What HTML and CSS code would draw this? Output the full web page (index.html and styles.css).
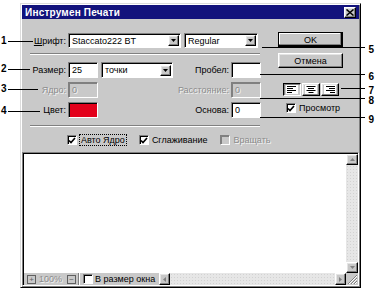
FILE: index.html
```html
<!DOCTYPE html>
<html>
<head>
<meta charset="utf-8">
<link rel="stylesheet" href="styles.css">
</head>
<body>
<div class="window">
  <div class="titlebar">
    <span class="title">Инструмен Печати</span>
    <span class="close raised"><svg width="8" height="7" viewBox="0 0 8 7"><path d="M0.5 0.5L7.5 6.5M7.5 0.5L0.5 6.5" stroke="#000" stroke-width="1.5"/></svg></span>
  </div>
  <div class="form">
    <div class="left">
      <div class="row r1">
        <span class="lbl"><u>Ш</u>рифт:</span>
        <span class="field combo w-font"><span class="val">Staccato222 BT</span><span class="drop raised"><svg width="5" height="3" viewBox="0 0 5 3"><path d="M0 0H5L2.5 3Z" fill="#000"/></svg></span></span>
        <span class="field combo w-style"><span class="val">Regular</span><span class="drop raised"><svg width="5" height="3" viewBox="0 0 5 3"><path d="M0 0H5L2.5 3Z" fill="#000"/></svg></span></span>
      </div>
      <div class="sep"></div>
      <div class="rows">
        <div class="row">
          <span class="lbl">Размер:</span>
          <span class="field w-num"><span class="val">25</span></span>
          <span class="field combo w-unit"><span class="val">точки</span><span class="drop raised"><svg width="5" height="3" viewBox="0 0 5 3"><path d="M0 0H5L2.5 3Z" fill="#000"/></svg></span></span>
          <span class="rlbl">Пробел:</span>
          <span class="field w-num"></span>
        </div>
        <div class="row">
          <span class="lbl dis">Ядро:</span>
          <span class="field w-num off"><span class="val dis">0</span></span>
          <span class="gap-unit"></span>
          <span class="rlbl dis">Расстояние:</span>
          <span class="field w-num off"><span class="val dis">0</span></span>
        </div>
        <div class="row">
          <span class="lbl">Цвет:</span>
          <span class="field w-num swatch"></span>
          <span class="gap-unit"></span>
          <span class="rlbl">Основа:</span>
          <span class="field w-num"><span class="val">0</span></span>
        </div>
      </div>
      <div class="sep sep2"></div>
      <div class="checks">
        <span class="chk"><span class="box"><svg width="8" height="7" viewBox="0 0 8 7"><path d="M1 3.5L3 5.5L7 1" fill="none" stroke="#000" stroke-width="1.6"/></svg></span><span class="focus">Авто Ядро</span></span>
        <span class="chk"><span class="box"><svg width="8" height="7" viewBox="0 0 8 7"><path d="M1 3.5L3 5.5L7 1" fill="none" stroke="#000" stroke-width="1.6"/></svg></span><span>Сглаживание</span></span>
        <span class="chk"><span class="box off"></span><span class="dis">Вращать</span></span>
      </div>
    </div>
    <div class="right">
      <span class="btn raised btn-ok">OK</span>
      <span class="btn raised btn-cancel">Отмена</span>
      <div class="aligns">
        <span class="abtn pressed"><svg width="12" height="9" viewBox="0 0 12 9"><rect width="12" height="9" fill="#fff"/><path d="M1 1.5H10M1 3.5H7M1 5.5H10M1 7.5H6" stroke="#000"/></svg></span>
        <span class="abtn raised"><svg width="12" height="9" viewBox="0 0 12 9"><rect width="12" height="9" fill="#fff"/><path d="M1.5 1.5H10.5M3 3.5H9M1.5 5.5H10.5M3.5 7.5H8.5" stroke="#000"/></svg></span>
        <span class="abtn raised"><svg width="12" height="9" viewBox="0 0 12 9"><rect width="12" height="9" fill="#fff"/><path d="M2 1.5H11M5 3.5H11M2 5.5H11M6 7.5H11" stroke="#000"/></svg></span>
      </div>
      <span class="chk preview-chk"><span class="box"><svg width="8" height="7" viewBox="0 0 8 7"><path d="M1 3.5L3 5.5L7 1" fill="none" stroke="#000" stroke-width="1.6"/></svg></span><span>Просмотр</span></span>
    </div>
  </div>
  <div class="preview">
    <div class="pv-main">
      <div class="canvas"></div>
      <div class="vscroll">
        <span class="sbtn raised"><svg width="5" height="3" viewBox="0 0 5 3"><path d="M0 3H5L2.5 0Z" fill="#808080"/></svg></span>
        <span class="track"></span>
        <span class="sbtn raised"><svg width="5" height="3" viewBox="0 0 5 3"><path d="M0 0H5L2.5 3Z" fill="#808080"/></svg></span>
      </div>
    </div>
    <div class="pv-bar">
      <span class="zbtn">+</span>
      <span class="zoomval dis">100%</span>
      <span class="zbtn">−</span>
      <span class="vsep"></span>
      <span class="chk fit"><span class="box"></span><span>В размер окна</span></span>
      <div class="hscroll">
        <span class="sbtn raised"><svg width="3" height="5" viewBox="0 0 3 5"><path d="M3 0V5L0 2.5Z" fill="#808080"/></svg></span>
        <span class="track"></span>
        <span class="sbtn raised"><svg width="3" height="5" viewBox="0 0 3 5"><path d="M0 0V5L3 2.5Z" fill="#808080"/></svg></span>
      </div>
      <span class="grip"><svg width="12" height="12" viewBox="0 0 12 12"><path d="M11 2L2 11M11 5L5 11M11 8L8 11" stroke="#808080"/><path d="M11 3L3 11M11 6L6 11M11 9L9 11" stroke="#fff"/></svg></span>
    </div>
  </div>
</div>

<div class="callout l" style="top:41px;width:25px"><b>1</b></div>
<div class="callout l" style="top:69px;width:22px"><b>2</b></div>
<div class="callout l" style="top:89px;width:30px"><b>3</b></div>
<div class="callout l" style="top:111px;width:32px"><b>4</b></div>
<div class="callout r" style="top:47px;left:262px"><b>5</b></div>
<div class="callout r" style="top:74px;left:260px"><b>6</b></div>
<div class="callout r" style="top:88px;left:341px"><b>7</b></div>
<div class="callout r" style="top:98px;left:260px"><b>8</b></div>
<div class="callout r" style="top:117px;left:260px"><b>9</b></div>
</body>
</html>
```

FILE: styles.css
```css
* { box-sizing: border-box; }
body {
  margin: 0;
  background: #fff;
  font: 9px "Liberation Sans", Arial, sans-serif;
  color: #000;
  position: relative;
  width: 377px;
  height: 292px;
  overflow: hidden;
  white-space: nowrap;
}
.raised {
  background: #c8c8c8;
  border: 1px solid;
  border-color: #fff #000 #000 #fff;
  box-shadow: inset -1px -1px #808080, inset 1px 1px #e4e4e4;
}
.dis { color: #8c8c8c; text-shadow: 1px 1px #f4f4f4; }

.window {
  margin: 3px 0 0 20px;
  width: 341px;
  height: 285px;
  background: #c9c9c9;
  border: 1px solid;
  border-color: #dcdcdc #000 #000 #dcdcdc;
  box-shadow: inset 1px 1px #fff, inset -1px -1px #808080;
  padding: 1px;
  display: flex;
  flex-direction: column;
}
.titlebar {
  height: 14px;
  flex: none;
  background: #12127c;
  display: flex;
  align-items: center;
  justify-content: space-between;
  padding: 0 3px 0 3px;
}
.title { color: #fff; font-weight: bold; font-size: 10px; letter-spacing: 0.2px; }
.close {
  width: 12px;
  height: 11px;
  display: flex;
  align-items: center;
  justify-content: center;
}

.form { display: flex; height: 133px; flex: none; }
.left { width: 240px; padding-top: 14px; }
.right {
  width: 65px;
  margin-left: 16px;
  padding-top: 13px;
  display: flex;
  flex-direction: column;
}
.row { display: flex; align-items: center; height: 16px; }
.r1 { height: 15px; }
.rows { margin-top: 7px; display: flex; flex-direction: column; gap: 4px; }
.lbl { width: 44px; text-align: right; flex: none; }
.rlbl { width: 56px; text-align: right; flex: none; }
.field {
  height: 100%;
  background: #fff;
  border: 1px solid;
  border-color: #808080 #fff #fff #808080;
  box-shadow: inset 1px 1px #000;
  display: flex;
  align-items: center;
  padding-left: 3px;
  flex: none;
  margin-left: 2px;
}
.field.off { background: #c9c9c9; box-shadow: inset 1px 1px #808080; }
.field.swatch { background: #e3001b; }
.combo { padding-right: 1px; }
.combo .val { flex: 1; }
.drop {
  width: 11px;
  height: 11px;
  display: flex;
  align-items: center;
  justify-content: center;
}
.w-font { width: 113px; }
.w-style { width: 74px; margin-left: 3px; }
.w-num { width: 30px; }
.w-unit { width: 72px; margin-left: 3px; }
.gap-unit { width: 75px; flex: none; }

.sep {
  margin: 5px 0 0 8px;
  width: 230px;
  height: 2px;
  border-top: 1px solid #808080;
  border-bottom: 1px solid #fff;
}
.sep2 { margin-top: 7px; }

.checks { margin-top: 7px; height: 12px; display: flex; align-items: center; padding-left: 45px; gap: 13px; }
.chk { display: inline-flex; align-items: center; gap: 3px; }
.box {
  width: 10px;
  height: 10px;
  background: #fff;
  border: 1px solid;
  border-color: #808080 #fff #fff #808080;
  box-shadow: inset 1px 1px #000;
  display: flex;
  align-items: center;
  justify-content: center;
  flex: none;
}
.box.off { background: #c9c9c9; box-shadow: inset 1px 1px #808080; }
.focus { outline: 1px dotted #000; outline-offset: 0; padding: 0 1px; }

.btn {
  height: 15px;
  display: flex;
  align-items: center;
  justify-content: center;
}
.btn-ok { border-color: #fff #000 #000 #fff; outline: 1px solid #000; outline-offset: -1px; box-shadow: inset -1px -1px #000, inset -2px -2px #808080, inset 1px 1px #fff; }
.btn-cancel { margin-top: 6px; }
.aligns { display: flex; gap: 1px; margin-top: 15px; padding-left: 5px; }
.abtn {
  width: 18px;
  height: 13px;
  display: flex;
  align-items: center;
  justify-content: center;
}
.pressed {
  background: #c9c9c9;
  border: 1px solid;
  border-color: #000 #fff #fff #000;
  box-shadow: inset 1px 1px #808080;
}
.preview-chk { margin-top: 7px; padding-left: 8px; }

.preview {
  flex: 1;
  display: flex;
  flex-direction: column;
  border: 1px solid;
  border-color: #808080 #fff #fff #808080;
  box-shadow: inset 1px 1px #000;
  padding: 1px 0 0 1px;
}
.pv-main { flex: 1; display: flex; }
.canvas { flex: 1; background: #fff; }
.vscroll { width: 12px; display: flex; flex-direction: column; background: #e2e2e2; }
.sbtn {
  width: 12px;
  height: 11px;
  display: flex;
  align-items: center;
  justify-content: center;
  flex: none;
}
.track {
  flex: 1;
  background-color: #e6e6e6;
  background-image: radial-gradient(#d2d2d2 0.6px, transparent 0.7px);
  background-size: 3px 3px;
}
.pv-bar { height: 12px; display: flex; align-items: center; }
.zbtn {
  width: 9px;
  height: 9px;
  margin-left: 3px;
  border: 1px solid #606060;
  background: #c9c9c9;
  font-size: 8px;
  line-height: 7px;
  text-align: center;
  color: #606060;
}
.zoomval { margin: 0 2px 0 3px; width: 23px; }
.vsep { width: 2px; height: 12px; border-left: 1px solid #808080; border-right: 1px solid #fff; margin: 0 3px 0 2px; }
.fit { gap: 2px; }
.hscroll { flex: 1; display: flex; margin-left: 4px; height: 12px; }
.hscroll .sbtn { width: 11px; height: 12px; }
.grip { width: 12px; height: 12px; flex: none; }

.callout { position: absolute; height: 1px; }
.callout.l { left: 8px; border-top: 1px solid #000; }
.callout.l b { position: absolute; left: -7px; top: -7px; font-size: 10px; }
.callout.r { right: 12px; border-top: 1px solid #000; }
.callout.r b { position: absolute; right: -9px; top: -4px; font-size: 10px; }
```
